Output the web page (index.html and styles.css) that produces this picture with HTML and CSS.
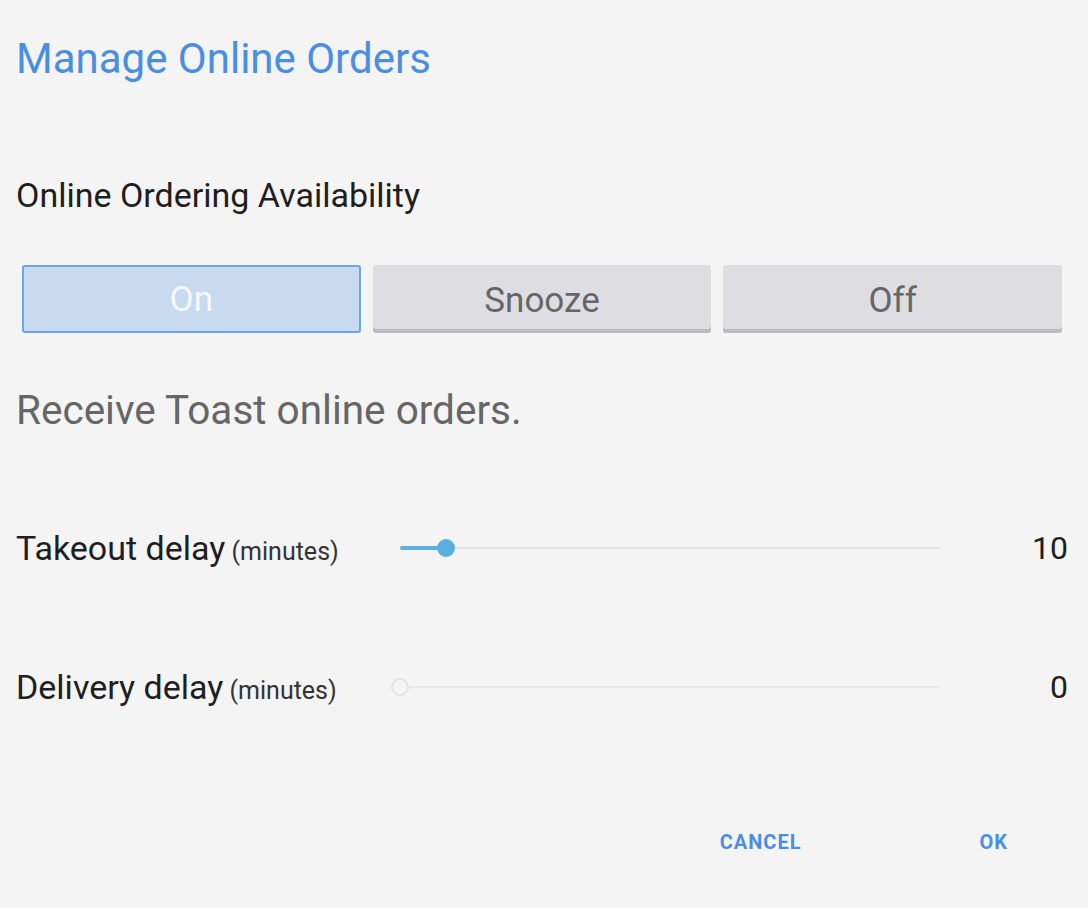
FILE: index.html
```html
<!DOCTYPE html>
<html>
<head>
<meta charset="utf-8">
<link rel="stylesheet" href="styles.css">
</head>
<body>
<div class="dialog">
  <h1 class="title">Manage Online Orders</h1>
  <div class="section-label">Online Ordering Availability</div>
  <div class="segments">
    <div class="seg seg-active">On</div>
    <div class="seg">Snooze</div>
    <div class="seg">Off</div>
  </div>
  <div class="desc">Receive Toast online orders.</div>
  <div class="row row-takeout">
    <div class="row-label">Takeout delay<span class="unit"> (minutes)</span></div>
    <div class="slider">
      <div class="track"></div>
      <div class="track-fill" style="width: 46px"></div>
      <div class="thumb" style="left: 46px"></div>
    </div>
    <div class="value">10</div>
  </div>
  <div class="row row-delivery">
    <div class="row-label">Delivery delay<span class="unit"> (minutes)</span></div>
    <div class="slider">
      <div class="track track-light"></div>
      <div class="thumb thumb-empty"></div>
    </div>
    <div class="value">0</div>
  </div>
  <div class="actions">
    <button class="action action-cancel">CANCEL</button>
    <button class="action action-ok">OK</button>
  </div>
</div>
</body>
</html>
```
FILE: styles.css
```css
html, body {
  margin: 0;
  padding: 0;
  background: #f4f4f4;
}
body {
  font-family: Roboto, "Noto Sans", sans-serif;
  width: 1088px;
  height: 908px;
  overflow: hidden;
}
.dialog {
  padding: 0 20px 0 16px;
  display: flex;
  flex-direction: column;
}
.title {
  margin: 34px 0 0 0;
  font-weight: 400;
  font-size: 42px;
  line-height: 50px;
  color: #4a8ee2;
}
.section-label {
  margin-top: 91px;
  font-size: 34px;
  line-height: 40px;
  color: #1e1e1e;
}
.segments {
  margin-top: 50px;
  margin-left: 6px;
  margin-right: 6px;
  display: grid;
  grid-template-columns: 1fr 1fr 1fr;
  gap: 12px;
}
.seg {
  height: 68px;
  box-sizing: border-box;
  padding-top: 2px;
  background: #dedde2;
  border-radius: 3px;
  box-shadow: inset 0 -4px 0 #bcbcc0;
  display: flex;
  align-items: center;
  justify-content: center;
  font-size: 35px;
  color: #666;
}
.seg-active {
  background: #c8daef;
  border: 2px solid #70a3e3;
  padding-top: 0;
  box-shadow: none;
  color: #f6f8fb;
}
.desc {
  margin-top: 54px;
  font-size: 40.5px;
  line-height: 46px;
  color: #666;
}
.row {
  display: flex;
  align-items: center;
  height: 60px;
}
.row-takeout {
  margin-top: 85px;
}
.row-delivery {
  margin-top: 79px;
}
.row-label {
  width: 384px;
  font-size: 34px;
  color: #1e1e1e;
  white-space: nowrap;
}
.unit {
  font-size: 25px;
  color: #333;
}
.slider {
  position: relative;
  width: 540px;
  height: 20px;
}
.track {
  position: absolute;
  left: 0;
  right: 0;
  top: 9px;
  height: 2px;
  background: #e2e2e2;
}
.track-light {
  background: #e8e8e8;
}
.track-fill {
  position: absolute;
  left: 0;
  top: 8px;
  height: 4px;
  border-radius: 2px;
  background: #5aafe1;
}
.thumb {
  position: absolute;
  top: 1px;
  width: 18px;
  height: 18px;
  margin-left: -9px;
  border-radius: 50%;
  background: #5aafe1;
}
.thumb-empty {
  left: 0;
  top: 1px;
  width: 18px;
  height: 18px;
  margin-left: -9px;
  box-sizing: border-box;
  background: #f4f4f4;
  border: 2px solid #e4e4e4;
}
.value {
  flex: 1;
  text-align: right;
  font-size: 32px;
  color: #1e1e1e;
}
.actions {
  margin-top: 113px;
  display: flex;
  justify-content: flex-end;
  padding-right: 60px;
}
.action {
  background: none;
  border: none;
  padding: 0;
  font-family: Roboto, sans-serif;
  font-weight: 700;
  font-size: 20px;
  letter-spacing: 1px;
  color: #4a8ee2;
}
.action-cancel {
  margin-right: 178px;
}
```
